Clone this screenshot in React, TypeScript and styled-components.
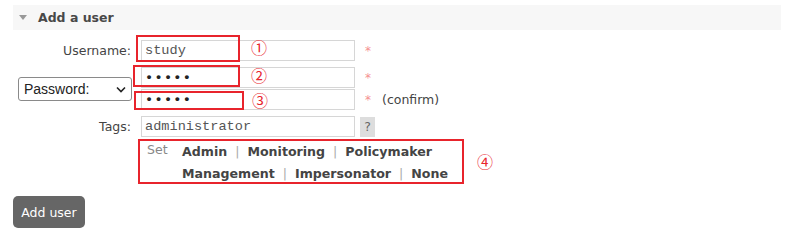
import React from "react";
import styled, { createGlobalStyle } from "styled-components";

const GlobalStyle = createGlobalStyle`
  body {
    margin: 0;
    background: #fff;
    font-family: "DejaVu Sans", Verdana, sans-serif;
    font-size: 12.5px;
    color: #444;
  }
`;

const Page = styled.div`
  width: 798px;
  height: 242px;
  padding: 5px 17px 0 13px;
  box-sizing: border-box;
`;

const SectionHead = styled.div`
  height: 25px;
  background: #f7f7f7;
  display: flex;
  align-items: center;
  padding-left: 6px;
  gap: 11px;
  font-weight: bold;
  font-size: 12.5px;
  color: #484848;
`;

const Caret = styled.span`
  width: 0;
  height: 0;
  border-left: 4px solid transparent;
  border-right: 4px solid transparent;
  border-top: 5px solid #999;
`;

const Form = styled.div`
  display: grid;
  grid-template-columns: 128px 214px 1fr;
  row-gap: 6px;
  margin-top: 10px;
`;

const Label = styled.div`
  display: flex;
  align-items: center;
  justify-content: flex-end;
  padding-right: 10px;
  height: 21px;
`;

const LabelCell = styled.div`
  display: flex;
  align-items: center;
  justify-content: flex-end;
  padding-right: 9px;
`;

const SelectWrap = styled.div`
  position: relative;
  width: 114px;
  height: 24px;
`;

const Select = styled.select`
  appearance: none;
  width: 100%;
  height: 100%;
  border: 1px solid #8a8a8a;
  border-radius: 3px;
  background: #fff;
  font-family: "Liberation Sans", Arial, sans-serif;
  font-size: 14px;
  color: #222;
  padding: 0 0 0 5px;
`;

const Chevron = styled.svg`
  position: absolute;
  right: 6px;
  top: 9px;
  pointer-events: none;
`;

const Stack = styled.div<{ $gap?: number }>`
  display: flex;
  flex-direction: column;
  gap: ${(p) => p.$gap ?? 0}px;
`;

const Field = styled.div`
  position: relative;
  height: 21px;
`;

const Input = styled.div<{ $password?: boolean }>`
  box-sizing: border-box;
  height: 21px;
  width: 214px;
  border: 1px solid #d6d6d6;
  font-family: "Liberation Mono", "Courier New", monospace;
  font-size: 13.6px;
  padding: 0 3px;
  display: flex;
  align-items: center;
  letter-spacing: ${(p) => (p.$password ? "1.3px" : "0")};
  font-weight: ${(p) => (p.$password ? "bold" : "normal")};
  color: ${(p) => (p.$password ? "#222" : "#555")};
`;

const Note = styled.div`
  display: flex;
  align-items: center;
  height: 21px;
  padding-left: 10px;
  gap: 11px;
  color: #444;
`;

const Star = styled.span`
  color: #f58f8f;
  font-size: 12px;
`;

const Help = styled.span`
  margin-left: 5px;
  width: 15px;
  height: 20px;
  background: #ddd;
  color: #666;
  display: flex;
  align-items: center;
  justify-content: center;
  font-size: 12.5px;
`;

const Marker = styled.div<{ $l: number; $t: number; $w: number; $h: number }>`
  position: absolute;
  left: ${(p) => p.$l}px;
  top: ${(p) => p.$t}px;
  width: ${(p) => p.$w}px;
  height: ${(p) => p.$h}px;
  border: 2px solid #e8242c;
  box-sizing: border-box;
  pointer-events: none;
`;

const Num = styled.span<{ $l: number; $t: number }>`
  position: absolute;
  left: ${(p) => p.$l}px;
  top: ${(p) => p.$t}px;
  color: #e8242c;
  font-family: "Noto Sans CJK SC", "DejaVu Sans", sans-serif;
  font-size: 16px;
  line-height: 16px;
`;

const TagBox = styled.div`
  position: relative;
  grid-column: 2 / 4;
  display: flex;
  padding: 2px 0 0 6px;
  margin-top: -4px;
  height: 44px;
`;

const SetLabel = styled.span`
  color: #888;
  width: 35px;
  line-height: 18px;
`;

const Links = styled.div`
  width: 280px;
  font-weight: bold;
  font-size: 12.6px;
  line-height: 22px;
  color: #444;
`;

const Sep = styled.span`
  font-weight: normal;
  color: #aaa;
  margin: 0 8px;
`;

const Button = styled.button`
  margin-top: 11px;
  height: 32px;
  width: 72px;
  border: none;
  border-radius: 5px;
  background: #666;
  color: #fff;
  font-family: "DejaVu Sans", Verdana, sans-serif;
  font-size: 12.5px;
  padding: 0;
`;

const tags = [
  ["Admin", "Monitoring", "Policymaker"],
  ["Management", "Impersonator", "None"],
];

export default function App() {
  return (
    <>
      <GlobalStyle />
      <Page>
        <SectionHead>
          <Caret />
          Add a user
        </SectionHead>
        <Form>
          <Label>Username:</Label>
          <Field>
            <Input>study</Input>
            <Marker $l={-5} $t={-5} $w={104} $h={27} />
            <Num $l={110} $t={-1}>①</Num>
          </Field>
          <Note>
            <Star>*</Star>
          </Note>

          <LabelCell>
            <SelectWrap>
              <Select defaultValue="password">
                <option value="password">Password:</option>
                <option value="hash">Password hash:</option>
              </Select>
              <Chevron width="10" height="7" viewBox="0 0 10 7">
                <path d="M1 1.5 L5 5.5 L9 1.5" fill="none" stroke="#222" strokeWidth="1.6" />
              </Chevron>
            </SelectWrap>
          </LabelCell>
          <Stack $gap={1}>
            <Field>
              <Input $password>•••••</Input>
              <Marker $l={-8} $t={-2} $w={107} $h={22} />
              <Num $l={110} $t={0}>②</Num>
            </Field>
            <Field>
              <Input $password>•••••</Input>
              <Marker $l={-7} $t={2} $w={110} $h={19} />
              <Num $l={111} $t={3}>③</Num>
            </Field>
          </Stack>
          <Stack $gap={1}>
            <Note>
              <Star>*</Star>
            </Note>
            <Note>
              <Star>*</Star>
              (confirm)
            </Note>
          </Stack>

          <Label>Tags:</Label>
          <Field>
            <Input>administrator</Input>
          </Field>
          <Note style={{ paddingLeft: 0 }}>
            <Help>?</Help>
          </Note>

          <div />
          <TagBox>
            <SetLabel>Set</SetLabel>
            <Links>
              {tags.map((line, i) => (
                <div key={i}>
                  {line.map((t, j) => (
                    <React.Fragment key={t}>
                      {j > 0 && <Sep>|</Sep>}
                      {t}
                    </React.Fragment>
                  ))}
                </div>
              ))}
            </Links>
            <Marker $l={-3} $t={0} $w={326} $h={45} />
            <Num $l={336} $t={14}>④</Num>
          </TagBox>
        </Form>
        <Button>Add user</Button>
      </Page>
    </>
  );
}
